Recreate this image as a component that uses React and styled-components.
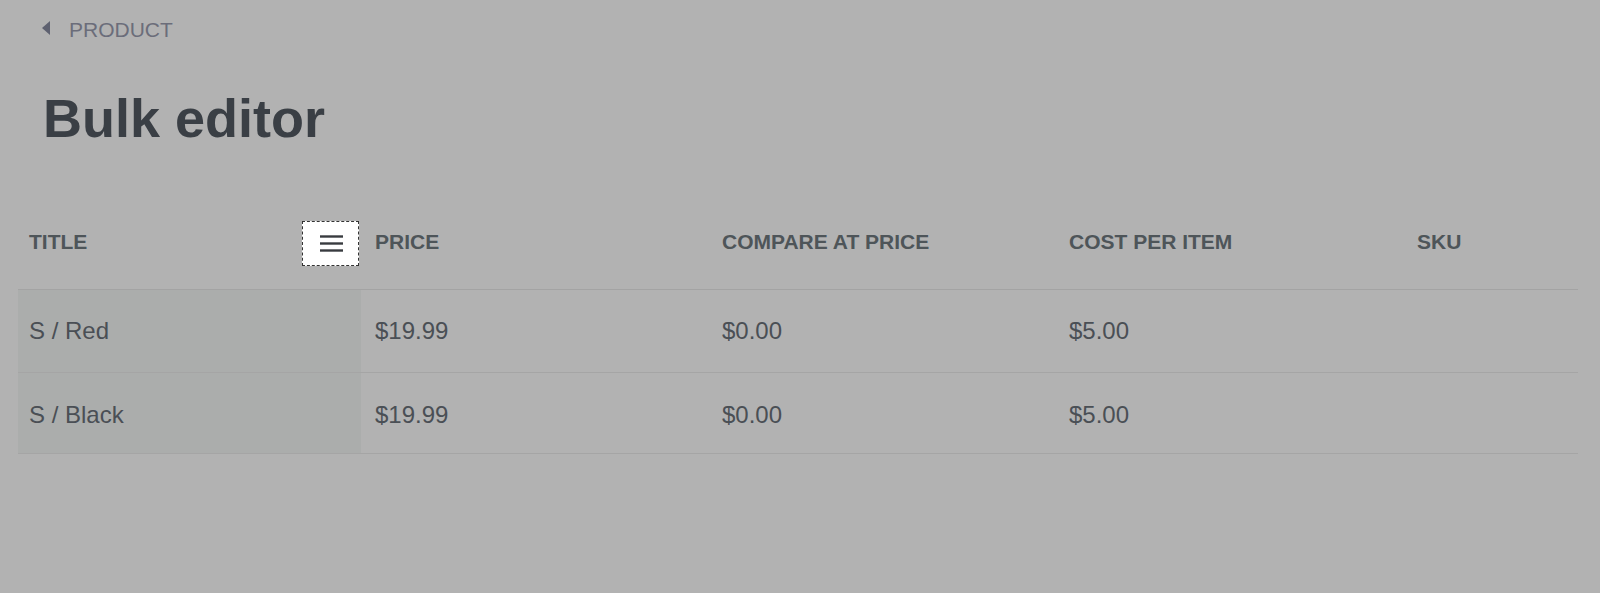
import React from "react";
import styled, { createGlobalStyle } from "styled-components";

const GlobalStyle = createGlobalStyle`
  html, body {
    margin: 0;
    padding: 0;
    background: #b2b2b2;
    font-family: "Liberation Sans", Arial, sans-serif;
  }
`;

const Page = styled.div`
  min-height: 593px;
  background: #b2b2b2;
  padding: 0 22px 0 18px;
  box-sizing: border-box;
`;

const Breadcrumb = styled.a`
  display: flex;
  align-items: center;
  gap: 19px;
  height: 60px;
  padding-left: 24px;
  color: #6b6d7a;
  font-size: 21px;
  text-decoration: none;
  text-transform: uppercase;
`;

const Caret = styled.span`
  width: 0;
  height: 0;
  border-top: 7px solid transparent;
  border-bottom: 7px solid transparent;
  border-right: 8px solid #5e6170;
  margin-top: -4px;
`;

const Heading = styled.h1`
  margin: 0;
  padding: 28px 0 0 25px;
  height: 135px;
  box-sizing: border-box;
  font-size: 54px;
  line-height: 60px;
  font-weight: 700;
  color: #3a3f45;
`;

const Table = styled.div`
  display: grid;
  grid-template-columns: 343px 347px 347px 348px 175px;
`;

const HeadCell = styled.div`
  display: flex;
  align-items: center;
  justify-content: space-between;
  height: 94px;
  padding: 0 2px 0 ${({ $first }) => ($first ? "11px" : "14px")};
  border-bottom: 1.5px solid #a3a3a3;
  font-size: 21px;
  font-weight: 700;
  color: #4e5559;
  text-transform: uppercase;
`;

const Cell = styled.div`
  display: flex;
  align-items: center;
  height: ${({ $h }) => $h}px;
  padding-left: ${({ $first }) => ($first ? "11px" : "14px")};
  padding-top: ${({ $shift }) => $shift || 0}px;
  box-sizing: border-box;
  background: ${({ $first }) => ($first ? "#abadac" : "transparent")};
  border-bottom: 1.5px solid #a5a5a5;
  font-size: 24px;
  color: #4a4f55;
`;

const MenuButton = styled.button`
  width: 57px;
  height: 45px;
  display: flex;
  align-items: center;
  justify-content: center;
  background: #fff;
  border: 1px dashed #333;
  padding: 0 0 0 2px;
  margin-top: 2px;
`;

const columns = ["Title", "Price", "Compare at price", "Cost per item", "SKU"];

const rows = [
  { title: "S / Red", price: "$19.99", compare: "$0.00", cost: "$5.00", sku: "", h: 83, shift: 0 },
  { title: "S / Black", price: "$19.99", compare: "$0.00", cost: "$5.00", sku: "", h: 81, shift: 4 },
];

const App = () => {
  return (
    <>
      <GlobalStyle />
      <Page>
        <Breadcrumb href="#0">
          <Caret />
          Product
        </Breadcrumb>
        <Heading>Bulk editor</Heading>
        <Table>
          {columns.map((col, i) => (
            <HeadCell key={col} $first={i === 0}>
              {col}
              {i === 0 && (
                <MenuButton aria-label="Menu">
                  <svg width="23" height="17" viewBox="0 0 23 17">
                    <g stroke="#383b3f" strokeWidth="2.4">
                      <line x1="0" y1="1.5" x2="23" y2="1.5" />
                      <line x1="0" y1="8.5" x2="23" y2="8.5" />
                      <line x1="0" y1="15.5" x2="23" y2="15.5" />
                    </g>
                  </svg>
                </MenuButton>
              )}
            </HeadCell>
          ))}
          {rows.map((r) =>
            [r.title, r.price, r.compare, r.cost, r.sku].map((v, i) => (
              <Cell key={r.title + i} $first={i === 0} $h={r.h} $shift={r.shift}>
                {v}
              </Cell>
            ))
          )}
        </Table>
      </Page>
    </>
  );
};

export default App;
